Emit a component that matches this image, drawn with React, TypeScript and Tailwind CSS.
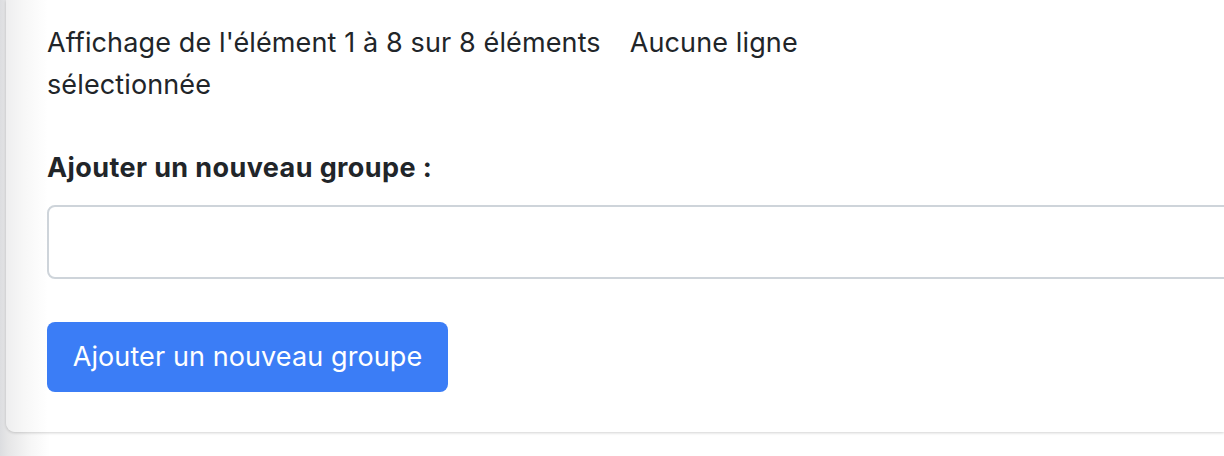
import React from "react";

export default function App() {
  return (
    <div className="h-[456px] w-[1224px] overflow-hidden bg-[linear-gradient(to_right,#dcdde0_0px,#e6e6e7_8px,#f6f6f6_30px,#ffffff_50px)] font-['Inter',sans-serif]">
      <div className="ml-[6px] h-[432px] rounded-bl-[9px] bg-[linear-gradient(to_right,#eeeeef_0px,#f7f7f7_18px,#ffffff_42px)] shadow-[0_1px_3px_rgba(0,0,0,0.18)] pl-[41px] pt-[22px]">
        <div className="w-[800px] text-[27px] leading-[42px] tracking-[0.12px] text-[#212529]">
          <span>Affichage de l'élément 1 à 8 sur 8 éléments</span>
          <span className="inline-block w-[29px]" />
          <span>Aucune ligne sélectionnée</span>
        </div>
        <div className="mt-[41px] text-[27px] font-bold leading-[42px] tracking-[0.4px] text-[#212529]">
          Ajouter un nouveau groupe :
        </div>
        <div className="mt-[16px] h-[74px] w-[1200px] rounded-[8px] border-2 border-[#ced4da] bg-white" />
        <button className="mt-[43px] h-[70px] w-[401px] rounded-[8px] bg-[#3b7df6] text-[27px] tracking-[0.1px] text-white">
          Ajouter un nouveau groupe
        </button>
      </div>
    </div>
  );
}
